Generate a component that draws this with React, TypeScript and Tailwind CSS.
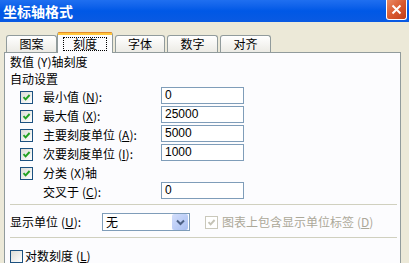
import type { ReactNode } from 'react'

const cjk = "font-['Noto_Sans_CJK_SC','Noto_Sans',sans-serif]"

function Check({ checked = false, disabled = false }: { checked?: boolean; disabled?: boolean }) {
  return (
    <span
      className={`flex h-[13px] w-[13px] shrink-0 items-center justify-center border ${
        disabled
          ? 'border-[#cac8bb] bg-white'
          : 'border-[#1c5180] bg-linear-to-br from-[#dcdcd6] to-white'
      }`}
    >
      {checked && (
        <svg width="9" height="9" viewBox="0 0 9 9">
          <path
            d="M1.5 4.2 L3.6 6.4 L7.6 2"
            stroke={disabled ? '#c5c3b6' : '#21a121'}
            strokeWidth="1.9"
            fill="none"
          />
        </svg>
      )}
    </span>
  )
}

function Field({ value }: { value: string }) {
  return (
    <div className="h-[17px] w-[83px] shrink-0 border border-[#7f9db9] bg-white pl-[3px] text-[12px] leading-[15px] font-['Liberation_Sans',sans-serif]">
      {value}
    </div>
  )
}

function Acc({ k }: { k: string }) {
  return (
    <span className="ml-[3px]">
      (<u className="underline-offset-1">{k}</u>)
    </span>
  )
}

type Row = { label: ReactNode; value?: string; check?: boolean }

const rows: Row[] = [
  { label: <>最小值<Acc k="N" />:</>, value: '0', check: true },
  { label: <>最大值<Acc k="X" />:</>, value: '25000', check: true },
  { label: <>主要刻度单位<Acc k="A" />:</>, value: '5000', check: true },
  { label: <>次要刻度单位<Acc k="I" />:</>, value: '1000', check: true },
  { label: <>分类<span className="ml-[3px]">(X)</span>轴</>, check: true },
  { label: <>交叉于<Acc k="C" />:</>, value: '0' },
]

const tabs = [
  { label: '图案', w: 'w-[51px]' },
  { label: '刻度', w: 'w-[56px]', active: true },
  { label: '字体', w: 'w-[50px]' },
  { label: '数字', w: 'w-[51px]' },
  { label: '对齐', w: 'w-[51px]' },
]

export default function App() {
  return (
    <div className={`h-[263px] w-[409px] overflow-hidden bg-[#ece9d8] text-[12px] text-black ${cjk}`}>
      {/* title bar */}
      <div className="flex h-[22px] items-start justify-between bg-linear-to-b from-[#1f6ff0] via-[#0058e6] to-[#0a5ae2]">
        <span className="pl-[3px] text-[14px] leading-[22px] font-bold text-white">坐标轴格式</span>
        <button className="mr-[2px] flex h-[20px] w-[21px] items-center justify-center rounded-b-[3px] border border-t-0 border-white bg-linear-to-br from-[#e98a64] via-[#d95a30] to-[#c03d18]">
          <svg width="11" height="11" viewBox="0 0 11 11">
            <path d="M1.5 1.5 L9.5 9.5 M9.5 1.5 L1.5 9.5" stroke="white" strokeWidth="2" />
          </svg>
        </button>
      </div>

      {/* tabs */}
      <div className="flex h-[30px] items-end pl-[6px]">
        {tabs.map((t, i) =>
          t.active ? (
            <div
              key={t.label}
              className={`${t.w} relative z-10 -mb-px flex h-[21px] shrink-0 flex-col rounded-t-[3px] border-x border-[#919b9c] bg-[#fcfcfe]`}
            >
              <div className="h-[1px] rounded-t-[3px] bg-[#e68b2c]" />
              <div className="h-[2px] bg-[#ffc73c]" />
              <div className="flex flex-1 items-start justify-center pt-[2px]">
                <span className="border border-dotted border-black px-[9px] leading-[12px]">{t.label}</span>
              </div>
            </div>
          ) : (
            <div
              key={t.label}
              className={`${t.w} ${i >= 2 ? 'ml-[2px]' : ''} flex h-[17px] shrink-0 items-center justify-center rounded-t-[3px] border-x border-t border-[#919b9c] bg-linear-to-b from-white to-[#ecebe5] leading-[16px]`}
            >
              {t.label}
            </div>
          )
        )}
      </div>

      {/* panel */}
      <div className="ml-[4px] h-[300px] w-[397px] border border-[#919b9c] bg-[#fcfcfe] pl-[5px]">
        <div className="mt-px h-[16px] leading-[16px]">
          数值<span className="ml-[3px]">(Y)</span>轴刻度
        </div>
        <div className="mt-px h-[16px] leading-[16px]">自动设置</div>

        <div className="flex flex-col">
          {rows.map((r, i) => (
            <div key={i} className="flex h-[19px] items-start">
              <div className="mt-[4px] ml-[10px] w-[13px]">{r.check !== undefined && <Check checked={r.check} />}</div>
              <span className="mt-[2px] ml-[10px] w-[118px] shrink-0 leading-[16px]">{r.label}</span>
              {r.value !== undefined && <Field value={r.value} />}
            </div>
          ))}
        </div>

        <div className="mt-[3px] h-px w-[387px] bg-[#d0d0bf]" />

        <div className="mt-[8px] flex h-[18px] items-center">
          <span className="w-[92px] shrink-0 leading-[16px]">
            显示单位<Acc k="U" />:
          </span>
          <div className="flex h-[18px] w-[88px] shrink-0 items-center justify-between border border-[#7f9db9] bg-white pl-[3px]">
            <span className="leading-[16px]">无</span>
            <span className="mr-px flex h-[16px] w-[16px] items-center justify-center rounded-[2px] bg-linear-to-br from-[#d3defb] to-[#a9bff1]">
              <svg width="9" height="7" viewBox="0 0 9 7">
                <path d="M1 1.5 L4.5 5 L8 1.5" stroke="#4d6185" strokeWidth="2" fill="none" />
              </svg>
            </span>
          </div>
          <div className="ml-[15px]">
            <Check checked disabled />
          </div>
          <span className="ml-[4px] leading-[16px] text-[#aca899]">
            图表上包含显示单位标签<Acc k="D" />
          </span>
        </div>

        <div className="mt-[6px] h-px w-[387px] bg-[#d0d0bf]" />

        <div className="mt-[10px] flex items-center">
          <Check />
          <span className="ml-[2px] leading-[16px]">
            对数刻度<Acc k="L" />
          </span>
        </div>
      </div>
    </div>
  )
}
